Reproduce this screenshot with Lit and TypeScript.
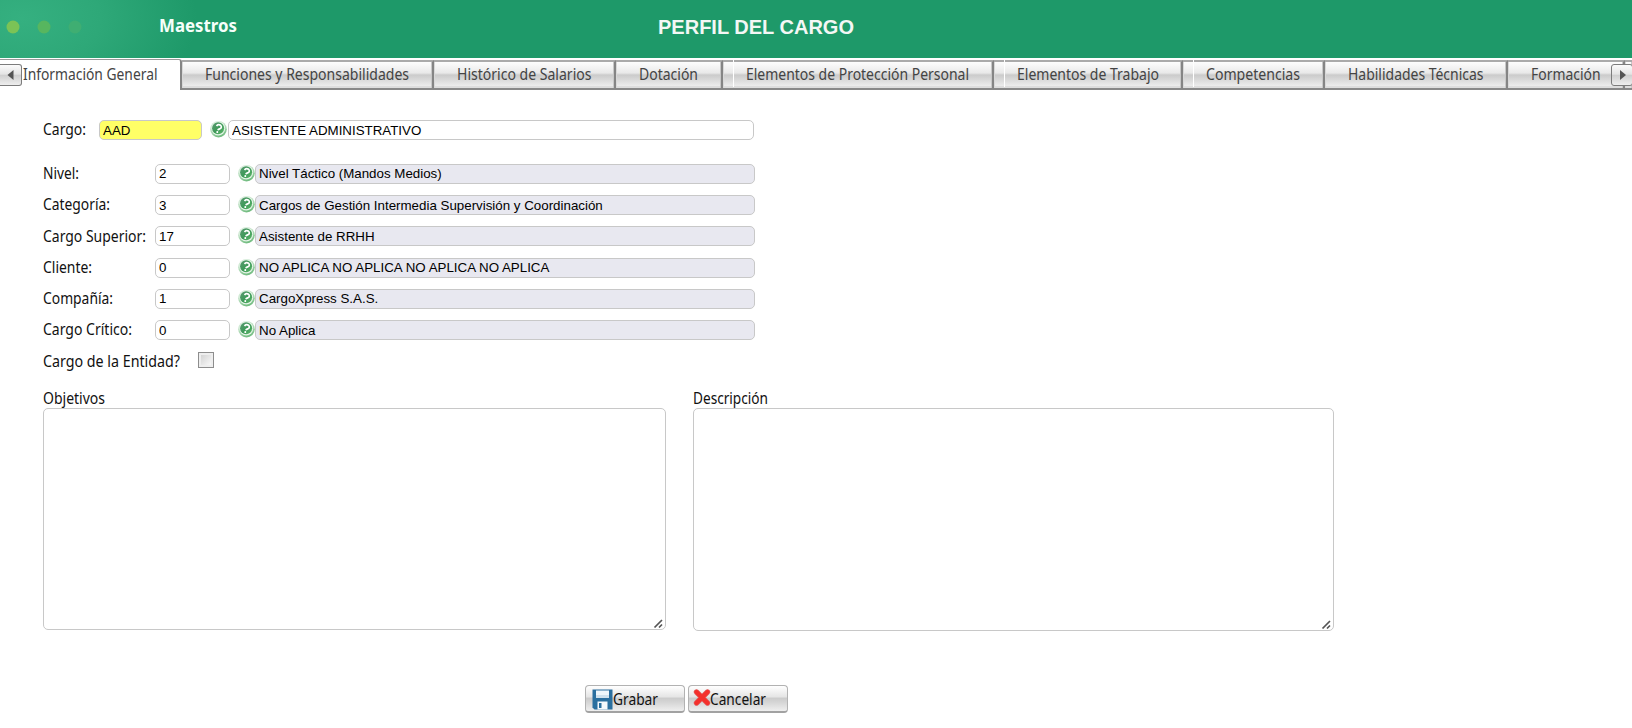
import { LitElement, html, css, svg } from "lit";
import { customElement } from "lit/decorators.js";

const label = (text: string, width: number, cls = "") => html`
  <svg class="label ${cls}" width=${width} height="22">
    <text x="0" y="16" textLength=${width} lengthAdjust="spacingAndGlyphs">${text}</text>
  </svg>`;

interface Tab { text: string; width: number; textWidth: number; seam?: boolean }
const TABS: Tab[] = [
  { text: "Funciones y Responsabilidades", width: 252, textWidth: 204 },
  { text: "Histórico de Salarios", width: 182, textWidth: 134.5 },
  { text: "Dotación", width: 107, textWidth: 59 },
  { text: "Elementos de Protección Personal", width: 271, textWidth: 223, seam: true },
  { text: "Elementos de Trabajo", width: 189, textWidth: 142, seam: true },
  { text: "Competencias", width: 142, textWidth: 94, seam: true },
  { text: "Habilidades Técnicas", width: 183, textWidth: 135.5 },
  { text: "Formación", width: 117, textWidth: 69.5 },
];

const FIELDS: [string, number, string, string][] = [
  ["Nivel:", 36, "2", "Nivel Táctico (Mandos Medios)"],
  ["Categoría:", 67, "3", "Cargos de Gestión Intermedia Supervisión y Coordinación"],
  ["Cargo Superior:", 103, "17", "Asistente de RRHH"],
  ["Cliente:", 49, "0", "NO APLICA NO APLICA NO APLICA NO APLICA"],
  ["Compañía:", 70, "1", "CargoXpress S.A.S."],
  ["Cargo Crítico:", 89, "0", "No Aplica"],
];

@customElement("help-icon")
class HelpIcon extends LitElement {
  static styles = css`
    :host { display: block; width: 17px; height: 19px; flex: none; }
    svg { display: block; }
  `;
  render() {
    return html`<svg width="17" height="19" viewBox="0 0 17 19">
      <defs>
        <linearGradient id="rim" x1="0" y1="0" x2=".4" y2="1">
          <stop offset="0" stop-color="#e3f3e5" /><stop offset=".55" stop-color="#b5ddbc" /><stop offset="1" stop-color="#74bd82" />
        </linearGradient>
        <linearGradient id="ball" x1="0" y1="0" x2="1" y2="1">
          <stop offset="0" stop-color="#5b9a72" /><stop offset=".55" stop-color="#3c9a57" /><stop offset="1" stop-color="#67bd70" />
        </linearGradient>
      </defs>
      <circle cx="8.5" cy="9.2" r="8.3" fill="url(#rim)" />
      <circle cx="8.3" cy="8.5" r="6.9" fill="#e6f4e8" />
      <circle cx="8.1" cy="8.3" r="6" fill="url(#ball)" />
      <g transform="rotate(20 8.3 8.6)">
        <path d="M5.9 6.9C6 3.9 10.7 3.9 10.7 6.7C10.7 8.5 8.5 8.4 8.4 10.3" fill="none" stroke="#fff" stroke-width="1.7" />
        <circle cx="8.5" cy="12.2" r="1" fill="#fff" />
      </g>
    </svg>`;
  }
}

@customElement("app-root")
class AppRoot extends LitElement {
  static styles = css`
    :host { display: block; width: 1632px; height: 728px; overflow: hidden; background: #fff; color: #111; font-family: "Liberation Sans", Arial, sans-serif; }
    * { box-sizing: border-box; }
    svg { display: block; flex: none; }
    .label { overflow: visible; font: 15.5px "Noto Sans", sans-serif; fill: #111; }
    .header { height: 58px; display: flex; background: radial-gradient(ellipse 175px 105px at 22px 18px, #35b080 0%, #2ea878 45%, #1e9969 100%) #1e9969; }
    .brand { font-weight: bold; font-size: 17px; fill: #f5fffa; }
    .title { font-family: "Liberation Sans", Arial, sans-serif; font-weight: bold; font-size: 20px; fill: #f4f7f5; }
    .brand-box { padding: 16px 0 0 59px; }
    .title-box { padding: 17.5px 0 0 421px; }

    .tabs { position: relative; height: 32px; display: flex; padding-top: 1px; }
    .tab { height: 30px; flex: none; margin-top: 1px; padding: 2px 0 0 23px; position: relative; border-top: 2px solid #aaa; border-right: 2px solid #858585; border-bottom: 2px solid #888;
      background: linear-gradient(#fdfdfd 0, #e9e9e9 42%, #cbcbcb 50%, #d4d4d4 62%, #ececec 92%, #ddd 94%); box-shadow: inset 1px 0 #d8d8d8, inset -1px 0 #c8c8c8; }
    .tab svg, .active svg { fill: #444; }
    .tab.seam::after { content: ""; position: absolute; left: 10px; top: -2px; bottom: 1px; width: 1px; background: #fff; }
    .active { width: 182px; height: 31px; flex: none; border-top: 1px solid #999; border-right: 2px solid #858585; border-radius: 0 3px 0 0; background: #fff; padding: 4px 0 0 23px; }
    .tab.rest { flex: 1; padding: 0; border-right: 0; }
    .scroll { position: absolute; top: 6px; height: 22px; width: 22px; border: 1px solid #7c7c7c; border-radius: 3px; background: linear-gradient(#fbfbfb, #e5e5e5 45%, #d0d0d0 52%, #eee); padding: 5px 7px; }
    .left { left: 0; border-left: 0; border-radius: 0 3px 3px 0; }
    .right { left: 1611px; }

    .form { padding: 30px 0 0 43px; }
    .row { display: flex; align-items: flex-start; height: 31.25px; }
    .row .label { position: relative; top: -0.7px; left: -0.5px; }
    .first { height: 43.8px; }
    .caption { width: 112px; flex: none; }
    .first .caption { width: 56px; }
    input { height: 20px; font: 13.333px "Liberation Sans", Arial, sans-serif; color: #000; border: 1px solid #c8c8c8; border-radius: 5px; padding: 0 3px; margin: 0; outline: none; background: #fff; }
    .code { width: 75px; margin-right: 8px; }
    .key { width: 103px; background: #ffff66; margin-right: 8px; }
    .desc { width: 500px; background: #e8e8f0; }
    .name { width: 526px; margin-left: 1px; }
    .entity { height: 31px; }
    .check { width: 16px; height: 16px; margin: 1px 0 0 18px; border: 1px solid #8d8d8d; background: linear-gradient(135deg, #ccc, #fff); box-shadow: inset 0 0 0 2px #eee; }
    .areas { display: flex; gap: 27px; margin-top: 5.7px; }
    .areas .label { height: 20px; margin-left: -0.5px; }
    textarea { display: block; border: 1px solid #c8c8c8; border-radius: 5px; resize: none; margin: 0; padding: 2px; outline: none; }
    .area { position: relative; }
    .grip { position: absolute; right: 2px; bottom: 1px; }
    .goals, .goals textarea { width: 623px; }
    .goals textarea { height: 222px; }
    .details, .details textarea { width: 641px; }
    .details textarea { height: 223px; }
    .goals { align-self: flex-start; }
    .actions { display: flex; gap: 3px; padding: 54px 0 0 542px; }
    .btn { width: 100px; height: 28px; display: flex; border: 1px solid #b2b2b2; border-radius: 4px; border-bottom: 2px solid #a2a2a2; background: linear-gradient(#fff, #e6e6e6 42%, #ccc 50%, #d6d6d6 66%, #efefef); padding: 3px 0 0 6px; }
    .cancel { padding-left: 5px; }
    .cross { overflow: visible; }
  `;

  render() {
    const grip = html`<svg class="grip" width="11" height="11"><path d="M1.5 9.5L9 2M6 9.5L9 6.5" stroke="#555" stroke-width="1.7" /></svg>`;
    return html`
      <div class="header">
        <svg width="100" height="58">
          ${[["13", "#7bc356"], ["44", "#57b65f"], ["75", "#3fae72"]].map(
            ([x, c]) => svg`<circle cx=${x} cy="27" r="6.5" fill=${c} />`)}
        </svg>
        <div class="brand-box">${label("Maestros", 78, "brand")}</div>
        <div class="title-box">${label("PERFIL DEL CARGO", 196, "title")}</div>
      </div>
      <div class="tabs">
        <div class="active">${label("Información General", 134.5)}</div>
        ${TABS.map((t) => html`
          <div class="tab ${t.seam ? "seam" : ""}" style="width:${t.width}px">${label(t.text, t.textWidth)}</div>`)}
        <div class="tab rest"></div>
        <div class="scroll left"><svg width="8" height="10"><path d="M6.5 0V10L.5 5Z" fill="#555" /></svg></div>
        <div class="scroll right"><svg width="8" height="10"><path d="M1 0V10L7 5Z" fill="#555" /></svg></div>
      </div>
      <div class="form">
        <div class="row first">
          <div class="caption">${label("Cargo:", 43)}</div>
          <input class="key" value="AAD" />
          <help-icon></help-icon>
          <input class="name" value="ASISTENTE ADMINISTRATIVO" />
        </div>
        ${FIELDS.map(([text, w, code, desc]) => html`
          <div class="row">
            <div class="caption">${label(text, w)}</div>
            <input class="code" .value=${code} />
            <help-icon></help-icon>
            <input class="desc" readonly .value=${desc} />
          </div>`)}
        <div class="row entity">${label("Cargo de la Entidad?", 137)}<div class="check"></div></div>
        <div class="areas">
          <div class="area goals">${label("Objetivos", 62)}<textarea></textarea>${grip}</div>
          <div class="area details">${label("Descripción", 75)}<textarea></textarea>${grip}</div>
        </div>
        <div class="actions">
          <div class="btn">
            <svg width="21" height="21" viewBox="0 0 21 21">
              <path d="M.5.5H20.5V20.5H2.5L.5 18.5Z" fill="#2a6f9f" />
              <path d="M4 1.5H17V9H4Z" fill="#eef6fb" /><path d="M4 6H17V9H4Z" fill="#cfe1ed" />
              <path d="M5.5 12.5H15.5V20.5H5.5Z" fill="#f3f8fc" /><path d="M7 14H9.5V19H7Z" fill="#2a6f9f" />
            </svg>
            ${label("Grabar", 45)}
          </div>
          <div class="btn cancel">
            <svg class="cross" width="16" height="20" viewBox="0 0 16 20">
              <path d="M2.5 3L13.5 14M13.5 3L2.5 14" stroke="#e06060" stroke-width="5.4" stroke-linecap="round" />
              <path d="M2.5 3L13.5 14M13.5 3L2.5 14" stroke="#f4302c" stroke-width="4.2" stroke-linecap="round" />
            </svg>
            ${label("Cancelar", 56)}
          </div>
        </div>
      </div>`;
  }
}
